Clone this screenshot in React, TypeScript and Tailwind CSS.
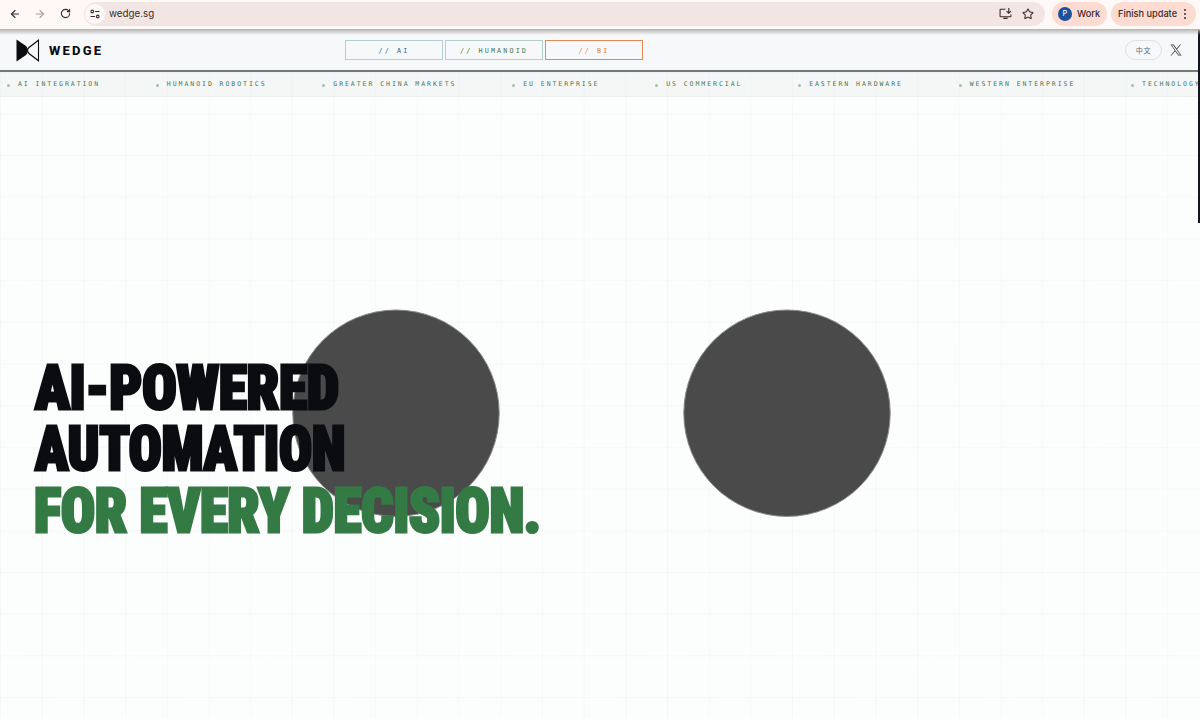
import { ArrowLeft, ArrowRight, RotateCw, Star } from 'lucide-react';

const navItems = [
  { label: '// AI', style: 'border-[#b3cdd4] text-[#2e6596]' },
  { label: '// HUMANOID', style: 'border-[#b3cfc6] text-[#3f7a52]' },
  { label: '// BI', style: 'border-[#e28a55] text-[#e2803f]' },
];

const tickerItems = [
  'AI INTEGRATION',
  'HUMANOID ROBOTICS',
  'GREATER CHINA MARKETS',
  'EU ENTERPRISE',
  'US COMMERCIAL',
  'EASTERN HARDWARE',
  'WESTERN ENTERPRISE',
  'TECHNOLOGY',
];

function BrowserBar() {
  return (
    <div className="relative z-20 flex h-[29px] items-center bg-[#fef8f6] pb-[2px] font-[Inter,sans-serif] text-[9.2px] text-[#3b2a26]">
      <ArrowLeft className="ml-[9px] size-[12px]" strokeWidth={2.2} />
      <ArrowRight className="ml-[13px] size-[12px] text-[#a9a09e]" strokeWidth={2.2} />
      <RotateCw className="ml-[14px] size-[11px]" strokeWidth={2.4} />
      <div className="ml-[13px] flex h-6 w-[961px] items-center rounded-full bg-[#f1e6e4] pr-[11px]">
        <span className="ml-[1px] flex size-5 items-center justify-center rounded-full bg-[#fef8f6]">
          <svg className="size-[10px]" viewBox="0 0 20 20" fill="none" stroke="currentColor" strokeWidth="2.2">
            <circle cx="4.5" cy="5" r="2.7" />
            <path d="M10 5h9M1 15h9" />
            <circle cx="15.5" cy="15" r="2.7" />
          </svg>
        </span>
        <span className="ml-[4px] flex-1 pt-px text-[9.8px]">wedge.sg</span>
        <svg className="size-[13px]" viewBox="0 0 24 24" fill="none" stroke="currentColor" strokeWidth="2">
          <path d="M12 4H3a1 1 0 0 0-1 1v12a1 1 0 0 0 1 1h18a1 1 0 0 0 1-1v-3M8 21h8M18 2v9M14 7.500l4 4 4-4" />
        </svg>
        <Star className="ml-[10px] size-[12px]" strokeWidth={2.1} />
      </div>
      <div className="ml-[7px] flex h-6 w-[55px] items-center rounded-full bg-[#fbdbd2]">
        <span className="ml-[6px] flex size-[14px] items-center justify-center rounded-full bg-[#1d519c] text-[7.5px] text-white">P</span>
        <span className="ml-[5px] font-medium">Work</span>
      </div>
      <div className="ml-[4px] flex h-6 w-[85px] items-center rounded-full bg-[#fbdbd2]">
        <span className="ml-[7px] w-[59px] font-medium whitespace-nowrap">Finish update</span>
        <span className="ml-[7px] flex flex-col gap-[2px]">
          <i className="size-[2px] rounded-full bg-[#3b2a26]" />
          <i className="size-[2px] rounded-full bg-[#3b2a26]" />
          <i className="size-[2px] rounded-full bg-[#3b2a26]" />
        </span>
      </div>
      <div className="absolute inset-x-0 top-[29px] h-[6px] bg-linear-to-b from-[#b4b2b0] to-transparent" />
    </div>
  );
}

function Header() {
  return (
    <header className="relative z-10 flex h-[43px] items-center border-b-2 border-[#747979] bg-[#f7f8fa]">
      <div className="flex w-[345px] items-center pt-[2px]">
        <svg className="ml-4 h-[23px] w-6" viewBox="0 0 24 23">
          <path d="M.5.500 10 7l1.500 2v5L10 16 .5 22.500z" fill="#0a0c10" />
          <path d="M22.500 1.200v20.600L13 14.500 11.700 12.500v-2L13 8.500z" fill="none" stroke="#0a0c10" strokeWidth="1.100" />
        </svg>
        <span className="ml-[9px] font-[Roboto,sans-serif] text-[13px] leading-none font-extrabold tracking-[2.2px] text-[#0a0c10]">WEDGE</span>
      </div>
      <nav className="flex gap-[2px] pt-px">
        {navItems.map((item) => (
          <a
            key={item.label}
            className={`flex h-5 w-[98px] items-center justify-center border pt-[2px] font-['DejaVu_Sans_Mono',monospace] text-[6.8px] tracking-[2.1px] ${item.style}`}
          >
            {item.label}
          </a>
        ))}
      </nav>
      <div className="ml-auto flex items-center pt-px pr-[18px]">
        <button className="h-5 w-[37px] rounded-full border border-[#dde1e6] font-['Noto_Sans_CJK_SC',sans-serif] text-[7px] leading-none tracking-[0.7px] text-[#5b6472]">
          中文
        </button>
        <svg className="ml-[8px] size-[12px]" viewBox="0 0 24 24" fill="#3a3f46">
          <path d="M14.095 10.316 22.286 1h-1.940L13.230 9.088 7.551 1H1l8.590 12.231L1 23h1.940l7.510-8.543L16.449 23H23zm-2.658 3.022-.872-1.218L3.640 2.432h2.980l5.590 7.821.869 1.219 7.265 10.166h-2.980z" />
        </svg>
      </div>
    </header>
  );
}

function Ticker() {
  return (
    <div className="flex h-[25px] items-center overflow-hidden border-b border-[#ebeeed] bg-[#f5f7f7] pt-[2px] pl-[7px] font-['DejaVu_Sans_Mono',monospace] text-[6.5px] tracking-[1.950px] text-[#3f794f]">
      {tickerItems.map((item) => (
        <span key={item} className="flex shrink-0 items-center pr-[55.750px] whitespace-nowrap">
          <i className="mr-[8px] size-[3px] rounded-full bg-[#a5bfad]" />
          {item}
        </span>
      ))}
    </div>
  );
}

function Hero() {
  return (
    <main className="relative h-[622px]">
      <svg className="absolute inset-0 h-full w-full" viewBox="0 0 1200 622" fill="#4a4a4a" stroke="#8b8b8b">
        <circle cx="396" cy="316.200" r="103.200" />
        <circle cx="787" cy="316.200" r="103.200" />
      </svg>
      <h1 className="relative pt-[261px] pl-[35px] font-[Roboto,sans-serif] text-[61.500px] leading-[61.300px] font-black font-stretch-condensed tracking-[-0.500px] whitespace-nowrap text-[#0a0c10] [-webkit-text-stroke:3px_currentColor] [stroke-linejoin:round]">
        <span className="block origin-left scale-x-[0.94]">AI-POWERED</span>
        <span className="block origin-left scale-x-[0.9]">AUTOMATION</span>
        <span className="-ml-px block origin-left scale-x-[0.93] text-[#347a44]">FOR EVERY DECISION.</span>
      </h1>
    </main>
  );
}

export default function App() {
  return (
    <div className="relative h-[719px] w-[1200px] overflow-hidden bg-[#fcfdfd]">
      <BrowserBar />
      <Header />
      <Ticker />
      <Hero />
      <div className="pointer-events-none absolute inset-x-0 top-[30px] bottom-0 bg-[linear-gradient(to_right,rgba(30,60,50,0.025)_1px,transparent_1px),linear-gradient(to_bottom,rgba(30,60,50,0.025)_1px,transparent_1px)] bg-size-[41.700px_41.700px]" />
      <div className="absolute top-[30px] right-0 z-10 h-[193px] w-[2px] bg-[#12141f]" />
    </div>
  );
}
